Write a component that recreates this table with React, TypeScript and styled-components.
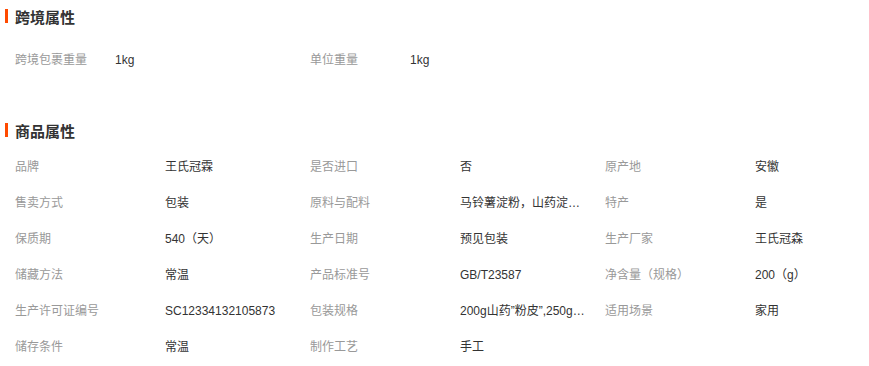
import { createGlobalStyle, styled } from "styled-components";

const GlobalStyle = createGlobalStyle`
  body {
    margin: 0;
    background: #fff;
    font-family: Tahoma, "Liberation Sans", "Noto Sans CJK SC", sans-serif;
    font-size: 12px;
    color: #333;
  }
`;

const Page = styled.div`
  padding-left: 5px;
  width: 869px;
  box-sizing: border-box;
`;

const Section = styled.section<{ $gap?: number }>`
  margin-top: ${(p) => p.$gap ?? 0}px;
`;

const Title = styled.h3`
  margin: 0;
  height: 32px;
  display: flex;
  align-items: center;
  font-size: 15px;
  font-weight: bold;
  color: #333;
  font-family: "Noto Sans CJK SC", sans-serif;

  &::before {
    content: "";
    width: 3px;
    height: 14px;
    background: #ff4a00;
    margin-right: 7px;
  }
`;

const List = styled.ul<{ $top: number }>`
  list-style: none;
  margin: 0;
  padding: ${(p) => p.$top}px 0 0 10px;
  display: grid;
  grid-template-columns: repeat(3, 295px);
`;

const Item = styled.li`
  display: flex;
  height: 36px;
  align-items: center;
  line-height: 36px;
`;

const Label = styled.span<{ $w: number }>`
  width: ${(p) => p.$w}px;
  flex: none;
  color: #999;
  white-space: nowrap;
`;

const Value = styled.span`
  width: 125px;
  color: #333;
  white-space: nowrap;
  overflow: hidden;
  text-overflow: ellipsis;
`;

const crossBorder = [
  ["跨境包裹重量", "1kg"],
  ["单位重量", "1kg"],
];

const goods = [
  ["品牌", "王氏冠霖"],
  ["是否进口", "否"],
  ["原产地", "安徽"],
  ["售卖方式", "包装"],
  ["原料与配料", "马铃薯淀粉，山药淀粉，水"],
  ["特产", "是"],
  ["保质期", "540（天）"],
  ["生产日期", "预见包装"],
  ["生产厂家", "王氏冠森"],
  ["储藏方法", "常温"],
  ["产品标准号", "GB/T23587"],
  ["净含量（规格）", "200（g）"],
  ["生产许可证编号", "SC12334132105873"],
  ["包装规格", "200g山药”粉皮”,250g山药粉丝"],
  ["适用场景", "家用"],
  ["储存条件", "常温"],
  ["制作工艺", "手工"],
];

export default function App() {
  return (
    <Page>
      <GlobalStyle />
      <Section>
        <Title>跨境属性</Title>
        <List $top={10}>
          {crossBorder.map(([k, v]) => (
            <Item key={k}>
              <Label $w={100}>{k}</Label>
              <Value>{v}</Value>
            </Item>
          ))}
        </List>
      </Section>
      <Section $gap={36}>
        <Title>商品属性</Title>
        <List $top={3}>
          {goods.map(([k, v]) => (
            <Item key={k}>
              <Label $w={150}>{k}</Label>
              <Value>{v}</Value>
            </Item>
          ))}
        </List>
      </Section>
    </Page>
  );
}
